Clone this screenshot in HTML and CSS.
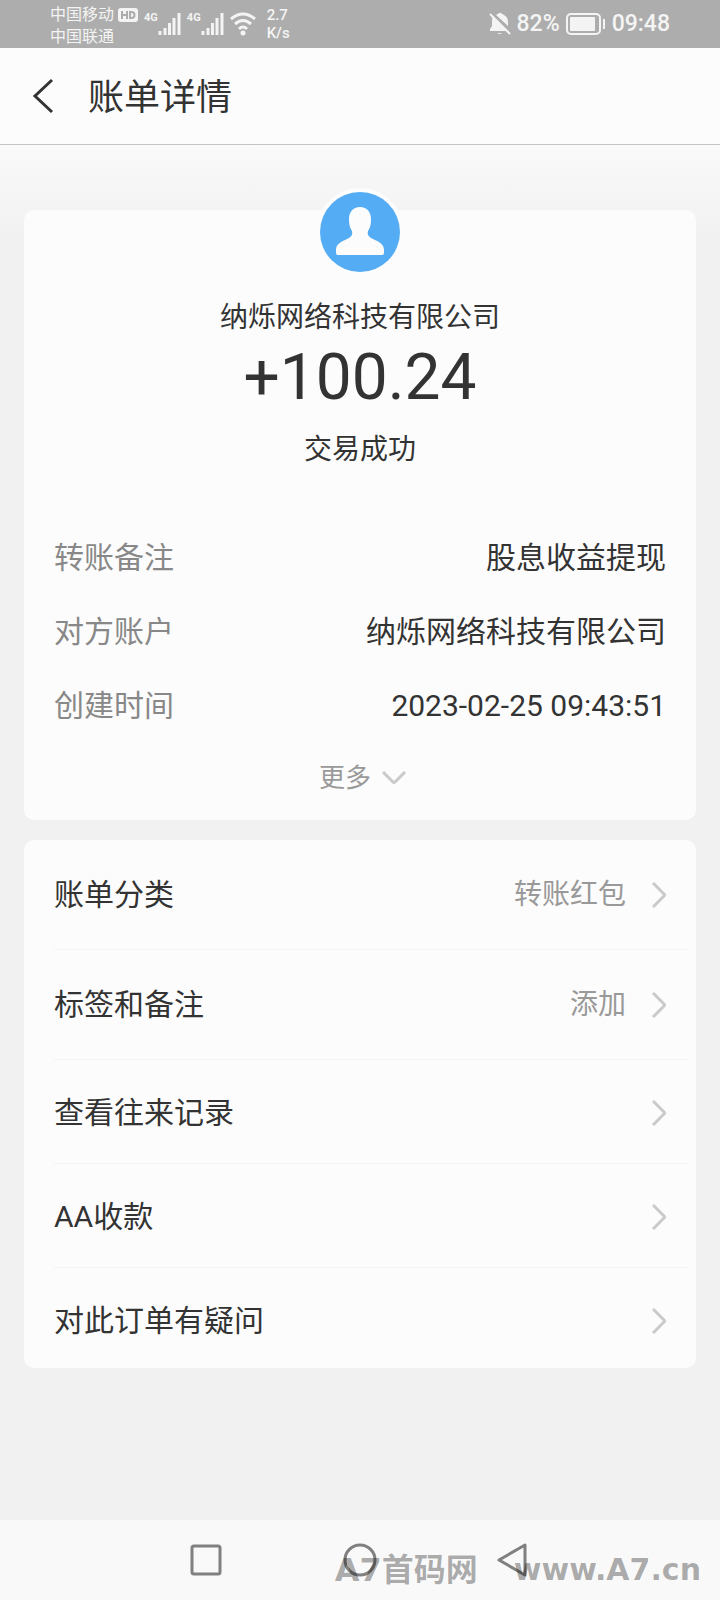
FILE: index.html
```
<!DOCTYPE html>
<html lang="zh-CN">
<head>
    <meta charset="UTF-8">
    <meta name="viewport" content="width=device-width, initial-scale=1.0">
    <title>账单详情</title>
    <link rel="stylesheet" href="styles.css">
</head>
<body>
    <!-- 状态栏 -->
    <div class="status-bar">
        <div class="status-left">
            <div class="carriers">
                <div class="carrier">中国移动
                    <svg class="hd" width="20" height="14" viewBox="0 0 20 14">
                        <rect width="20" height="14" rx="3" fill="#f4f4f4"/>
                        <path d="M4 3v8M9 3v8M4 7h5M12 4v6h1.500a3 3 0 0 0 0-6z" fill="none" stroke="#adadad" stroke-width="2"/>
                    </svg>
                </div>
                <div class="carrier">中国联通</div>
            </div>
            <div class="signal">
                <span class="net">4G</span>
                <svg width="23" height="24" viewBox="0 0 23 24">
                    <path d="M2 19v4M7 16v7M11.500 11v12M16 6v17M21 1v22" stroke="#f4f4f4" stroke-width="3"/>
                </svg>
            </div>
            <div class="signal">
                <span class="net">4G</span>
                <svg width="23" height="24" viewBox="0 0 23 24">
                    <path d="M2 19v4M7 16v7M11.500 11v12M16 6v17M21 1v22" stroke="#f4f4f4" stroke-width="3"/>
                </svg>
            </div>
            <svg class="wifi" width="26" height="24" viewBox="0 0 26 24">
                <path d="M1 7Q13-3 25 7M5 12q8-7 16 0M9 17q4-4 8 0" fill="none" stroke="#f4f4f4" stroke-width="3"/>
                <circle cx="13" cy="21" r="2.500" fill="#f4f4f4"/>
            </svg>
            <div class="speed">2.7<br>K/s</div>
        </div>
        <div class="status-right">
            <svg width="22" height="22" viewBox="0 0 22 22">
                <path d="M4 3L18 18H1v-2l2-3V8q0-3 1-5zM7 2q2-1 3-2h2q1 1 3 2 4 2 4 7v4z" fill="#f4f4f4"/>
                <path d="M1 1l20 20" stroke="#f4f4f4" stroke-width="2"/>
                <path d="M8 20h5q-2 2-5 0z" fill="#f4f4f4"/>
            </svg>
            <span>82%</span>
            <svg width="40" height="22" viewBox="0 0 40 22">
                <rect x="1" y="1" width="33" height="20" rx="4" fill="none" stroke="#f4f4f4" stroke-width="2"/>
                <rect x="4" y="4" width="25" height="14" rx="1" fill="#f4f4f4"/>
                <path d="M38 6v10" stroke="#f4f4f4" stroke-width="2"/>
            </svg>
            <span>09:48</span>
        </div>
    </div>

    <header class="header">
        <button class="back" aria-label="返回">
            <svg width="22" height="36" viewBox="0 0 22 36">
                <path d="M20 2L3 18l17 16" fill="none" stroke="#333" stroke-width="3"/>
            </svg>
        </button>
        <h1 class="title">账单详情</h1>
    </header>

    <main class="content">
        <section class="card bill">
            <svg class="avatar" width="88" height="88" viewBox="0 0 88 88">
                <circle cx="44" cy="44" r="44" fill="#fcfcfc"/>
                <circle cx="44" cy="44" r="40" fill="#54adf4"/>
                <path d="M44 19c7 0 11 5 11 12 0 6-1 9-3 12-1 4 1 6 5 8 7 3 11 6 11 11v3q0 2-2 2H22q-2 0-2-2v-3c0-5 4-8 11-11 4-2 6-4 5-8-2-3-3-6-3-12 0-7 4-12 11-12z" fill="#fcfcfc"/>
            </svg>
            <div class="payer">纳烁网络科技有限公司</div>
            <div class="amount">+100.24</div>
            <div class="state">交易成功</div>

            <dl class="details">
                <div class="detail">
                    <dt>转账备注</dt>
                    <dd>股息收益提现</dd>
                </div>
                <div class="detail">
                    <dt>对方账户</dt>
                    <dd>纳烁网络科技有限公司</dd>
                </div>
                <div class="detail">
                    <dt>创建时间</dt>
                    <dd>2023-02-25 09:43:51</dd>
                </div>
            </dl>

            <button class="more">更多
                <svg width="26" height="14" viewBox="0 0 26 14">
                    <path d="M2 1l10 10q1 1 2 0L24 1" fill="none" stroke="#cacaca" stroke-width="3"/>
                </svg>
            </button>
        </section>

        <nav class="card menu">
            <a class="item tall" href="#">
                <span class="label">账单分类</span>
                <span class="value">转账红包</span>
                <svg class="arrow" width="14" height="26" viewBox="0 0 14 26"><path d="M1 1l11 11q1 1 0 2L1 25" fill="none" stroke="#cacaca" stroke-width="3"/></svg>
            </a>
            <a class="item tall" href="#">
                <span class="label">标签和备注</span>
                <span class="value">添加</span>
                <svg class="arrow" width="14" height="26" viewBox="0 0 14 26"><path d="M1 1l11 11q1 1 0 2L1 25" fill="none" stroke="#cacaca" stroke-width="3"/></svg>
            </a>
            <a class="item" href="#">
                <span class="label">查看往来记录</span>
                <svg class="arrow" width="14" height="26" viewBox="0 0 14 26"><path d="M1 1l11 11q1 1 0 2L1 25" fill="none" stroke="#cacaca" stroke-width="3"/></svg>
            </a>
            <a class="item" href="#">
                <span class="label">AA收款</span>
                <svg class="arrow" width="14" height="26" viewBox="0 0 14 26"><path d="M1 1l11 11q1 1 0 2L1 25" fill="none" stroke="#cacaca" stroke-width="3"/></svg>
            </a>
            <a class="item" href="#">
                <span class="label">对此订单有疑问</span>
                <svg class="arrow" width="14" height="26" viewBox="0 0 14 26"><path d="M1 1l11 11q1 1 0 2L1 25" fill="none" stroke="#cacaca" stroke-width="3"/></svg>
            </a>
        </nav>
    </main>

    <!-- 系统导航键 -->
    <footer class="sys-nav">
        <button class="sys-key" aria-label="最近任务">
            <svg width="34" height="34" viewBox="0 0 34 34"><rect x="3" y="3" width="28" height="28" rx="2" fill="none" stroke="#808080" stroke-width="3"/></svg>
        </button>
        <button class="sys-key" aria-label="主屏幕">
            <svg width="34" height="34" viewBox="0 0 34 34"><circle cx="17" cy="17" r="15" fill="none" stroke="#808080" stroke-width="3"/></svg>
        </button>
        <button class="sys-key" aria-label="返回键">
            <svg width="34" height="34" viewBox="0 0 34 34"><path d="M28 2v30L2 17z" fill="none" stroke="#808080" stroke-width="3" stroke-linejoin="round"/></svg>
        </button>
        <div class="watermark">
            <span class="mark-name">A7首码网</span>
            <span class="mark-url">www.A7.cn</span>
        </div>
    </footer>
</body>
</html>
```

FILE: styles.css
```
* {
    margin: 0;
    padding: 0;
    box-sizing: border-box;
}

body {
    display: flex;
    flex-direction: column;
    min-height: 100vh;
    background-color: #f1f1f1;
    color: #333;
    font-family: Roboto, "Noto Sans CJK SC", sans-serif;
    font-size: 30px;
    line-height: 40px;
}

button {
    border: none;
    background: none;
    font: inherit;
    color: inherit;
    cursor: pointer;
}

svg {
    display: block;
    flex: none;
}

/* 状态栏 */
.status-bar {
    display: flex;
    justify-content: space-between;
    align-items: center;
    height: 48px;
    padding: 0 50px;
    background-color: #adadad;
    color: #f4f4f4;
}

.status-left,
.status-right {
    display: flex;
    align-items: center;
}

.status-left {
    gap: 6px;
}

.status-right {
    gap: 6px;
    font-size: 23px;
    font-weight: 500;
}

.carriers {
    padding-top: 4px;
    font-size: 16px;
    line-height: 22px;
}

.carrier {
    display: flex;
    align-items: center;
    gap: 4px;
}

.signal {
    display: flex;
    align-items: flex-start;
}

.net {
    font-size: 11px;
    font-weight: bold;
    line-height: 12px;
}

.speed {
    margin-left: 5px;
    font-size: 15px;
    font-weight: 500;
    line-height: 18px;
}

/* 标题栏 */
.header {
    display: flex;
    align-items: center;
    gap: 34px;
    height: 97px;
    padding: 0 32px;
    background-color: #fcfcfc;
    border-bottom: 1px solid #c4c4c4;
}

.title {
    padding-top: 4px;
    font-size: 36px;
    font-weight: normal;
}

.content {
    flex: 1;
    padding: 65px 24px 40px;
    background: linear-gradient(#fafafa, #f1f1f1 90px);
}

.card {
    border-radius: 10px;
    background-color: #fcfcfc;
}

/* 账单卡片 */
.bill {
    display: flex;
    flex-direction: column;
    align-items: center;
    margin-bottom: 20px;
    padding: 0 30px 22px;
}

.avatar {
    margin-top: -22px;
}

.payer,
.state {
    font-size: 28px;
}

.payer {
    margin-top: 22px;
}

.amount {
    font-size: 64px;
    line-height: 80px;
}

.state {
    margin-top: 12px;
}

.details {
    width: 100%;
    margin-top: 52px;
}

.detail {
    display: flex;
    justify-content: space-between;
    height: 74px;
    padding-top: 16px;
}

.detail dt {
    color: #888;
}

.more {
    display: flex;
    align-items: center;
    gap: 10px;
    margin: 14px 0 0 6px;
    font-size: 26px;
    color: #999;
}

/* 菜单列表 */
.menu {
    padding-left: 30px;
}

.item {
    display: flex;
    align-items: center;
    height: 104px;
    margin-right: 8px;
    padding: 2px 22px 0 0;
    border-bottom: 1px solid #f4f4f4;
    color: #333;
    text-decoration: none;
}

.item.tall {
    height: 110px;
    padding-top: 0;
}

.item:last-child {
    height: 100px;
    padding-top: 6px;
    border-bottom: none;
}

.label {
    flex: 1;
}

.value {
    margin-right: 26px;
    font-size: 28px;
    color: #999;
}

/* 底部导航 */
.sys-nav {
    position: relative;
    display: flex;
    justify-content: center;
    height: 80px;
    background-color: #f9f9f9;
}

.sys-key {
    display: flex;
    justify-content: center;
    align-items: center;
    width: 154px;
}

.watermark {
    position: absolute;
    right: 19px;
    bottom: 10px;
    display: flex;
    gap: 36px;
    color: rgba(0, 0, 0, 0.32);
    font-family: "DejaVu Sans", "Noto Sans CJK SC", sans-serif;
    font-weight: bold;
    white-space: nowrap;
    pointer-events: none;
}

.mark-name {
    font-size: 32px;
}
```
